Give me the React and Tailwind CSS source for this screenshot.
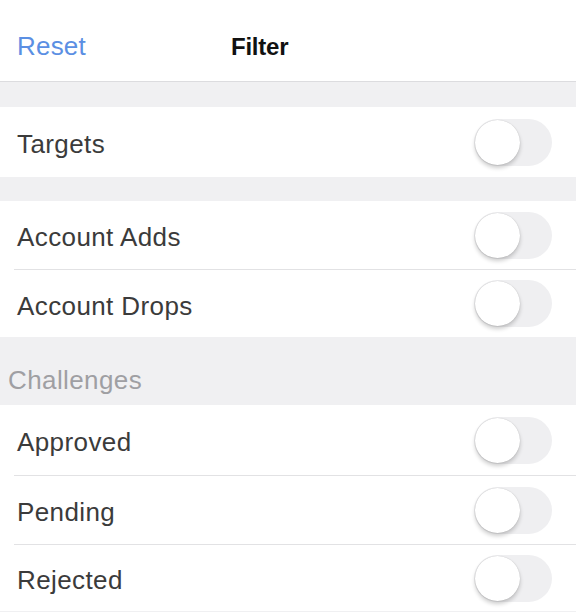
import React, { useState } from 'react';

const Toggle = ({ on, onChange }) => (
    <button
        onClick={onChange}
        className={`relative w-[78px] h-[47px] rounded-full ${on ? 'bg-[#4cd964]' : 'bg-[#efeff1]'}`}
    >
        <span
            className={`absolute top-[1px] w-[45px] h-[45px] rounded-full bg-white shadow-[0_3px_4px_rgba(0,0,0,0.2),0_0_1px_rgba(0,0,0,0.22)] ${on ? 'left-[32px]' : 'left-[1px]'}`}
        />
    </button>
);

const Row = ({ label, on, onChange, divider, height }) => (
    <div className="bg-white">
        <div className={`flex items-center justify-between pl-[17px] pr-[24px] ${height}`}>
            <span className="text-[26px] tracking-[0.4px] text-[#3b3b3b] pt-[5px]">{label}</span>
            <Toggle on={on} onChange={onChange} />
        </div>
        {divider && <div className="ml-[14px] h-px bg-[#e2e2e4]" />}
    </div>
);

const App = () => {
    const [filters, setFilters] = useState({});
    const flip = (key) => setFilters({ ...filters, [key]: !filters[key] });

    return (
        <div className="w-[576px] h-[612px] overflow-hidden bg-[#f0f0f2] font-['Liberation_Sans',Arial,sans-serif]">
            {/* header */}
            <div className="h-[82px] bg-white border-b border-[#dcdcdf] flex items-center pl-[17px] pt-[12px]">
                <button className="text-[26px] tracking-[0.2px] text-[#5b8fe3]">Reset</button>
                <span className="ml-[145px] text-[24px] font-bold tracking-[-0.2px] text-[#111]">Filter</span>
            </div>

            <div className="h-[25px]" />
            <Row label="Targets" height="h-[70px]" on={filters.targets} onChange={() => flip('targets')} />

            <div className="h-[24px]" />
            <Row label="Account Adds" height="h-[68px]" divider on={filters.adds} onChange={() => flip('adds')} />
            <Row label="Account Drops" height="h-[67px]" on={filters.drops} onChange={() => flip('drops')} />

            {/* challenges section */}
            <div className="h-[68px] flex items-end pl-[8px] pb-[5px]">
                <span className="text-[26px] tracking-[0.4px] text-[#9f9fa3]">Challenges</span>
            </div>
            <Row label="Approved" height="h-[70px]" divider on={filters.approved} onChange={() => flip('approved')} />
            <Row label="Pending" height="h-[68px]" divider on={filters.pending} onChange={() => flip('pending')} />
            <Row label="Rejected" height="h-[66px]" on={filters.rejected} onChange={() => flip('rejected')} />
        </div>
    );
};

export default App;
